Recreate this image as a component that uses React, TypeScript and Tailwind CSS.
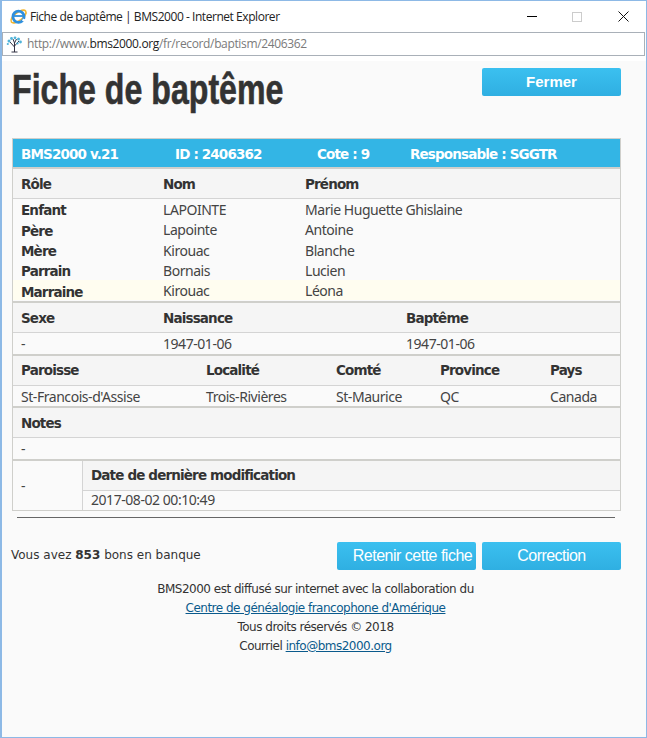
import React from 'react';

const BOLD = "font-['DejaVu_Sans'] font-bold text-[13.5px] tracking-[-0.85px]";
const BODY = "font-['Noto_Sans'] text-[14px] tracking-[-0.45px]";

const IeIcon = () => (
  <svg width="19" height="19" viewBox="0 0 19 19">
    <ellipse cx="9.5" cy="9.5" rx="9" ry="4" transform="rotate(-38 9.5 9.5)" fill="none" stroke="#f2b632" strokeWidth="1.6" />
    <circle cx="9.5" cy="9.8" r="5.6" fill="none" stroke="#2e8fdd" strokeWidth="2.8" />
    <path d="M5 9h9" stroke="#2e8fdd" strokeWidth="1.8" />
    <path d="M13.5 12.6l2.4 1" stroke="#ffffff" strokeWidth="2.4" />
  </svg>
);

const TreeIcon = () => (
  <svg width="17" height="17" viewBox="0 0 17 17">
    <path d="M8.5 16V7M8.5 11L4 6M8.5 10L13 5M8.5 7L7 3M8.5 7L10.5 3" stroke="#334" strokeWidth="1" fill="none" />
    <path d="M5.5 16h6" stroke="#334" strokeWidth="1" />
    <g fill="#4fb3d9">
      <circle cx="3" cy="5" r="1.5" />
      <circle cx="5.5" cy="2.5" r="1.4" />
      <circle cx="9" cy="1.8" r="1.4" />
      <circle cx="12.5" cy="3" r="1.5" />
      <circle cx="14.5" cy="6" r="1.4" />
      <circle cx="1.8" cy="8" r="1.1" />
      <circle cx="11.5" cy="7.5" r="1.1" />
    </g>
  </svg>
);

const BTN =
  "flex h-7 w-[139px] items-center justify-center rounded-[2px] bg-gradient-to-b from-[#3bc0f0] to-[#2fafe2] text-white font-['Liberation_Sans']";

interface GridRowProps {
  cols: string;
  cells: string[];
}

// grey heading band
const HeadRow: React.FC<GridRowProps> = ({ cols, cells }) => (
  <div className={`grid h-[30px] items-center border-b border-[#d4d4d4] bg-[#f5f5f5] text-[#333] ${BOLD} ${cols}`}>
    {cells.map((c, i) => (
      <div key={i} className="pl-[8px]">{c}</div>
    ))}
  </div>
);

const ValueRow: React.FC<GridRowProps> = ({ cols, cells }) => (
  <div className={`grid h-[22.4px] items-center border-b-2 border-[#cfcfcb] text-[#444] ${cols}`}>
    {cells.map((c, i) => (
      <div key={i} className="pb-[4px] pl-[8px]">{c}</div>
    ))}
  </div>
);

const PEOPLE = [
  ['Enfant', 'LAPOINTE', 'Marie Huguette Ghislaine'],
  ['Père', 'Lapointe', 'Antoine'],
  ['Mère', 'Kirouac', 'Blanche'],
  ['Parrain', 'Bornais', 'Lucien'],
  ['Marraine', 'Kirouac', 'Léona'],
];

export default function App() {
  return (
    <div className="flex h-[738px] w-[647px] flex-col overflow-hidden border border-l-2 border-[#8db9e6] bg-white">
      {/* Title bar */}
      <div className="flex h-[31px] shrink-0 items-center pl-[7px] font-['Open_Sans'] text-[12px] text-[#222]">
        <IeIcon />
        <span className="ml-[2px] tracking-[-0.45px]">Fiche de baptême | BMS2000 - Internet Explorer</span>
        <div className="ml-auto flex items-center">
          <div className="h-px w-[10px] bg-black" />
          <div className="ml-[35px] size-[10px] border border-[#ccc]" />
          <svg className="ml-[36px] mr-[17px]" width="11" height="11" viewBox="0 0 11 11">
            <path d="M.5.5l10 10M10.5.5l-10 10" stroke="#111" strokeWidth="1" />
          </svg>
        </div>
      </div>

      {/* Address bar */}
      <div className="mr-[1px] flex h-[24px] shrink-0 items-center border border-[#a9b0b8] pl-[3px] font-['Open_Sans'] text-[12px] tracking-[-0.35px] text-[#7a7a7a]">
        <TreeIcon />
        <span className="ml-[4px]">
          http://www.<span className="text-[#222]">bms2000.org</span>/fr/record/baptism/2406362
        </span>
      </div>

      {/* Page */}
      <div className="mt-[5px] flex-1 bg-[#fafafa]">
        <div className="flex h-[77px] items-start justify-between pl-[10px] pr-[25px]">
          <h1 className="mt-[5px] origin-left scale-x-[.765] whitespace-nowrap font-['Liberation_Sans',sans-serif] text-[42px] leading-[48px] font-bold text-[#333] [-webkit-text-stroke:0.6px_#333]">
            Fiche de baptême
          </h1>
          <button className={`${BTN} mt-[7px] text-[15px] font-bold`}>Fermer</button>
        </div>

        <div className={`ml-[10px] mr-[25px] border border-[#cfcfcb] ${BODY}`}>
          {/* Blue summary bar */}
          <div className={`flex h-[30px] items-center border-b-2 border-[#cfcfcb] bg-[#33b5e5] pt-[3px] text-white ${BOLD}`}>
            <span className="ml-[8px] w-[154px]">BMS2000 v.21</span>
            <span className="w-[142px]">ID : 2406362</span>
            <span className="w-[93px]">Cote : 9</span>
            <span>Responsable : SGGTR</span>
          </div>

          <HeadRow cols="grid-cols-[142px_142px_1fr] pt-px" cells={['Rôle', 'Nom', 'Prénom']} />
          <div className="border-b-2 border-[#cfcfcb] pb-px text-[#444]">
            {PEOPLE.map(([role, nom, prenom], i) => (
              <div
                key={role}
                className={`grid h-[20.3px] grid-cols-[142px_142px_1fr] items-center ${i === 4 ? 'bg-[#fffdf0]' : ''}`}
              >
                <div className={`pl-[8px] text-[#333] ${BOLD}`}>{role}</div>
                <div className="pb-[2px] pl-[8px]">{nom}</div>
                <div className="pb-[2px] pl-[8px]">{prenom}</div>
              </div>
            ))}
          </div>

          <HeadRow cols="grid-cols-[142px_243px_1fr]" cells={['Sexe', 'Naissance', 'Baptême']} />
          <ValueRow cols="grid-cols-[142px_243px_1fr]" cells={['-', '1947-01-06', '1947-01-06']} />

          <HeadRow cols="grid-cols-[185px_130px_104px_110px_1fr]" cells={['Paroisse', 'Localité', 'Comté', 'Province', 'Pays']} />
          <ValueRow
            cols="grid-cols-[185px_130px_104px_110px_1fr]"
            cells={["St-Francois-d'Assise", 'Trois-Rivières', 'St-Maurice', 'QC', 'Canada']}
          />

          <HeadRow cols="grid-cols-1" cells={['Notes']} />
          <ValueRow cols="grid-cols-1" cells={['-']} />

          <div className="flex text-[#444]">
            <div className="flex w-[70px] items-center border-r border-[#d4d4d4] pl-[8px]">-</div>
            <div className="flex-1">
              <HeadRow cols="grid-cols-1" cells={['Date de dernière modification']} />
              <div className="flex h-[19px] items-center pb-[2px] pl-[8px]">2017-08-02 00:10:49</div>
            </div>
          </div>
        </div>

        <hr className="ml-[15px] mr-[31px] mt-[6px] border-t border-[#666]" />

        <div className="mt-[24px] flex items-start justify-between pl-[9px] pr-[25px] font-['DejaVu_Sans'] text-[12px] text-[#333]">
          <div className="mt-[4px]">
            Vous avez <b>853</b> bons en banque
          </div>
          <div className="flex gap-[6px]">
            <button className={`${BTN} w-[138px] pl-[12px] text-[16px] tracking-[-0.5px]`}>Retenir cette fiche</button>
            <button className={`${BTN} text-[16px] tracking-[-0.55px]`}>Correction</button>
          </div>
        </div>

        <div className="mt-[10px] pr-[17px] text-center font-['DejaVu_Sans'] text-[12px] leading-[19px] tracking-[-0.5px] text-[#333]">
          <div>BMS2000 est diffusé sur internet avec la collaboration du</div>
          <div>
            <a className="text-[#0a5a8c] underline" href="#">Centre de généalogie francophone d'Amérique</a>
          </div>
          <div>Tous droits réservés © 2018</div>
          <div>
            Courriel <a className="text-[#0a5a8c] underline" href="#">info@bms2000.org</a>
          </div>
        </div>
      </div>
    </div>
  );
}
